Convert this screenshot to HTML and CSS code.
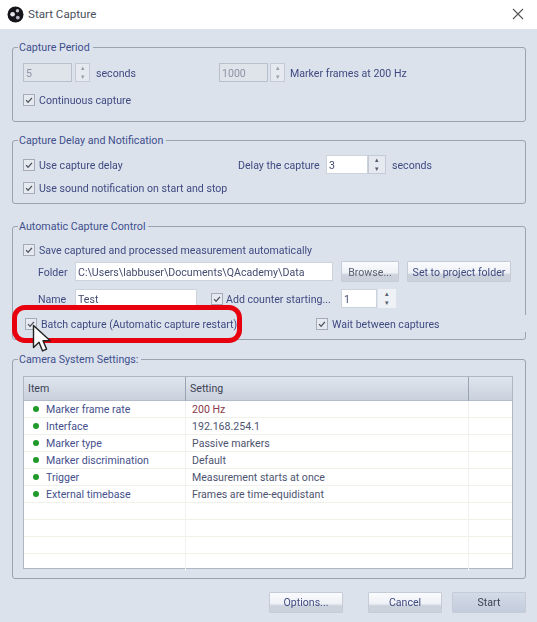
FILE: index.html
```html
<!DOCTYPE html>
<html lang="en">
<head>
<meta charset="utf-8">
<title>Start Capture</title>
<link rel="stylesheet" href="styles.css">
</head>
<body>
<div class="window">
  <header class="titlebar">
    <svg class="logo" width="17" height="17" viewBox="0 0 17 17"><circle cx="8.5" cy="8.5" r="8" fill="#15151a"/><circle cx="5.6" cy="8.2" r="2.3" fill="#e8e8ee"/><circle cx="10.5" cy="4.8" r="1.7" fill="#c8c8d2"/><circle cx="10.8" cy="11.6" r="1.9" fill="#b8b8c4"/></svg>
    <span class="title">Start Capture</span>
    <svg class="close" width="12" height="12" viewBox="0 0 12 12"><path d="M1 1l10 10M11 1L1 11" stroke="#555" stroke-width="1.1" fill="none"/></svg>
  </header>
  <main class="content">
    <section class="group g1">
      <h2 class="legend">Capture Period</h2>
      <div class="row r-period">
        <span class="input disabled w49">5</span>
        <span class="spin disabled-spin"><i>▴</i><i>▾</i></span>
        <span class="label seconds1">seconds</span>
        <span class="input disabled w49">1000</span>
        <span class="spin disabled-spin s2"><i>▴</i><i>▾</i></span>
        <span class="label frames">Marker frames at 200 Hz</span>
      </div>
      <div class="row r-cont"><span class="check"><svg viewBox="0 0 12 12"><path d="M2.5 6.2l2.4 2.6 4.6-5.4"/></svg></span><span class="label">Continuous capture</span></div>
    </section>

    <section class="group g2">
      <h2 class="legend">Capture Delay and Notification</h2>
      <div class="row r-delay">
        <span class="check"><svg viewBox="0 0 12 12"><path d="M2.5 6.2l2.4 2.6 4.6-5.4"/></svg></span><span class="label use-delay">Use capture delay</span>
        <span class="label delay-label">Delay the capture</span>
        <span class="input w42 delay-in">3</span>
        <span class="spin wide"><i>▴</i><i>▾</i></span>
        <span class="label seconds2">seconds</span>
      </div>
      <div class="row r-sound"><span class="check"><svg viewBox="0 0 12 12"><path d="M2.5 6.2l2.4 2.6 4.6-5.4"/></svg></span><span class="label">Use sound notification on start and stop</span></div>
    </section>

    <section class="group g3">
      <h2 class="legend">Automatic Capture Control</h2>
      <div class="row r-save"><span class="check"><svg viewBox="0 0 12 12"><path d="M2.5 6.2l2.4 2.6 4.6-5.4"/></svg></span><span class="label">Save captured and processed measurement automatically</span></div>
      <div class="row r-folder">
        <span class="label field-name">Folder</span>
        <span class="input w258">C:\Users\labbuser\Documents\QAcademy\Data</span>
        <span class="btn browse">Browse...</span>
        <span class="btn project">Set to project folder</span>
      </div>
      <div class="row r-name">
        <span class="label field-name">Name</span>
        <span class="input w122">Test</span>
        <span class="check add"><svg viewBox="0 0 12 12"><path d="M2.5 6.2l2.4 2.6 4.6-5.4"/></svg></span><span class="label add-label">Add counter starting...</span>
        <span class="input w36">1</span>
        <span class="spin wide light"><i>▴</i><i>▾</i></span>
      </div>
      <div class="row r-batch">
        <span class="check"><svg viewBox="0 0 12 12"><path d="M2.5 6.2l2.4 2.6 4.6-5.4"/></svg></span><span class="label batch-label">Batch capture (Automatic capture restart)</span>
        <span class="check"><svg viewBox="0 0 12 12"><path d="M2.5 6.2l2.4 2.6 4.6-5.4"/></svg></span><span class="label">Wait between captures</span>
      </div>
      <div class="highlight"></div>
      <svg class="cursor" width="19" height="29" viewBox="0 0 19 29"><path d="M1.5 1.5v22l5.5-5.2 3.6 8.6 4-1.8-3.6-8.4h7.2z" fill="#fff" stroke="#222" stroke-width="1.4" stroke-linejoin="round"/></svg>
    </section>

    <section class="group g4">
      <h2 class="legend">Camera System Settings:</h2>
      <div class="table">
        <div class="thead"><span class="c1">Item</span><span class="c2">Setting</span><span class="c3"></span></div>
        <div class="tr"><span class="c1"><b class="dot"></b>Marker frame rate</span><span class="c2 red">200 Hz</span><span class="c3"></span></div>
        <div class="tr"><span class="c1"><b class="dot"></b>Interface</span><span class="c2">192.168.254.1</span><span class="c3"></span></div>
        <div class="tr"><span class="c1"><b class="dot"></b>Marker type</span><span class="c2">Passive markers</span><span class="c3"></span></div>
        <div class="tr"><span class="c1"><b class="dot"></b>Marker discrimination</span><span class="c2">Default</span><span class="c3"></span></div>
        <div class="tr"><span class="c1"><b class="dot"></b>Trigger</span><span class="c2">Measurement starts at once</span><span class="c3"></span></div>
        <div class="tr"><span class="c1"><b class="dot"></b>External timebase</span><span class="c2">Frames are time-equidistant</span><span class="c3"></span></div>
        <div class="tr"><span class="c1"></span><span class="c2"></span><span class="c3"></span></div>
        <div class="tr"><span class="c1"></span><span class="c2"></span><span class="c3"></span></div>
        <div class="tr"><span class="c1"></span><span class="c2"></span><span class="c3"></span></div>
        <div class="tr last"><span class="c1"></span><span class="c2"></span><span class="c3"></span></div>
      </div>
    </section>

    <footer class="actions">
      <span class="btn action">Options...</span>
      <span class="btn action cancel">Cancel</span>
      <span class="btn action start">Start</span>
    </footer>
  </main>
</div>
</body>
</html>
```
FILE: styles.css
```css
* { box-sizing: border-box; }
html, body { margin: 0; height: 100%; }
body { font: 10.6px/16px Roboto, "Open Sans", sans-serif; color: #3f4a80; background: #dbe2ec; }
.window { width: 537px; height: 622px; overflow: hidden; filter: blur(0.35px); }

.titlebar { height: 29px; background: #fff; display: flex; align-items: center; padding: 0 13px 1px 7px; }
.logo { flex: none; }
.title { margin-left: 4px; font-size: 11.6px; color: #4a4f5c; flex: 1; }

.content { padding: 18px 11px 0 12px; }
.group { position: relative; border: 1px solid #9aa3b0; border-radius: 3px; }
.legend { position: absolute; left: 5px; top: -8px; margin: 0; padding: 0 3px 0 1px; font: inherit; font-size: 10.7px; color: #3f4f8c; background: #dbe2ec; }
.g1 { height: 75px; }
.g2 { height: 64px; margin-top: 18px; }
.g3 { height: 114px; margin-top: 22px; }
.g3::after { content: ""; position: absolute; right: -1px; top: 88px; width: 1px; height: 17px; background: #dbe2ec; }
.g4 { height: 220px; margin-top: 19px; }

.row { display: flex; align-items: center; position: absolute; left: 10px; }
.label { display: block; height: 16px; line-height: 18px; white-space: nowrap; }
.check { flex: none; width: 12px; height: 12px; border: 1px solid #a4acb8; background: #e6eaf0; margin-right: 4px; display: block; }
.check svg { display: block; width: 10px; height: 10px; }
.check path { fill: none; stroke: #4a5060; stroke-width: 1.6; }

.input { flex: none; display: block; height: 19px; line-height: 20px; padding-left: 2px; background: #fff; border: 1px solid #ccd3dd; color: #444c70; white-space: nowrap; overflow: hidden; }
.input.disabled { background: #dfe4eb; border-color: #b8c0cb; color: #8c94a4; }
.w49 { width: 49px; }
.w42 { width: 42px; }
.w258 { width: 258px; }
.w122 { width: 122px; }
.w36 { width: 36px; }

.spin { flex: none; width: 15px; height: 19px; margin-left: 3px; display: flex; flex-direction: column; background: #e6eaf0; border: 1px solid #c4cbd6; color: #555c6c; font-size: 7px; line-height: 8px; text-align: center; }
.spin i { flex: 1; font-style: normal; }
.spin.disabled-spin { color: #9aa0ac; }
.spin.s2 { margin-left: 2px; }
.spin.wide { width: 18px; margin-left: 0; }
.spin.light { background: #eef1f6; border-color: #eef1f6; margin-left: 1px; }

.r-period { top: 15px; }
.seconds1 { width: 123px; margin-left: 6px; }
.frames { margin-left: 5px; }
.r-cont { top: 44px; }

.r-delay { top: 14px; }
.use-delay { width: 198px; }
.delay-label { width: 84px; margin-left: 1px; }
.delay-in { margin-left: 4px; }
.seconds2 { margin-left: 6px; }
.r-sound { top: 39px; }

.r-save { top: 15px; }
.r-folder { top: 34px; left: 25px; }
.field-name { width: 37px; }
.btn { flex: none; display: flex; align-items: center; justify-content: center; height: 21px; border: 1px solid #c6ccd7; border-radius: 1px; background: linear-gradient(#fafbfd, #eef1f6 55%, #ccd2dc 68%); white-space: nowrap; }
.browse { width: 58px; margin-left: 8px; padding-top: 2px; color: #5a6070; }
.project { width: 104px; margin-left: 8px; padding-top: 2px; }
.r-name { top: 62px; left: 25px; }
.add { margin-left: 14px; margin-right: 3px; }
.add-label { width: 115px; }
.r-batch { top: 89px; left: 12px; }
.batch-label { width: 275px; }

.highlight { position: absolute; left: -1px; top: 78px; width: 230px; height: 38px; border: 5px solid #e8000f; border-radius: 13px; }
.cursor { position: absolute; left: 19px; top: 97px; }

.table { position: absolute; left: 10px; top: 16px; width: 490px; height: 193px; background: #fff; border: 1px solid #aeb6c2; }
.thead, .tr { display: grid; grid-template-columns: 162px 283px 1fr; }
.thead { height: 24px; background: linear-gradient(#dfe5ee, #c9d1dd); border-bottom: 1px solid #b4bcc9; color: #3c4254; line-height: 24px; }
.thead span { padding-left: 4px; border-right: 1px solid #9aa3b0; }
.thead .c3 { border: 0; }
.tr { height: 17px; line-height: 18px; border-bottom: 1px solid #f0f2ea; }
.tr.last { border-bottom: 0; }
.tr span { white-space: nowrap; border-right: 1px solid #f0f2ee; }
.tr .c3 { border: 0; }
.tr .c1 { display: flex; align-items: flex-start; padding-left: 9px; color: #44508c; }
.tr .c2 { padding-left: 6px; color: #4d5470; }
.tr .c2.red { color: #8a3a4c; }
.dot { flex: none; width: 6px; height: 6px; border-radius: 50%; background: #1f9a2a; margin: 5px 7px 0 0; }

.actions { position: relative; display: flex; margin-top: 13px; padding-left: 257px; }
.action { width: 74px; height: 21px; }
.cancel { margin-left: 25px; }
.start { margin-left: 10px; background: linear-gradient(#d3dbe8, #c3ccdb); color: #3c4254; }
```
